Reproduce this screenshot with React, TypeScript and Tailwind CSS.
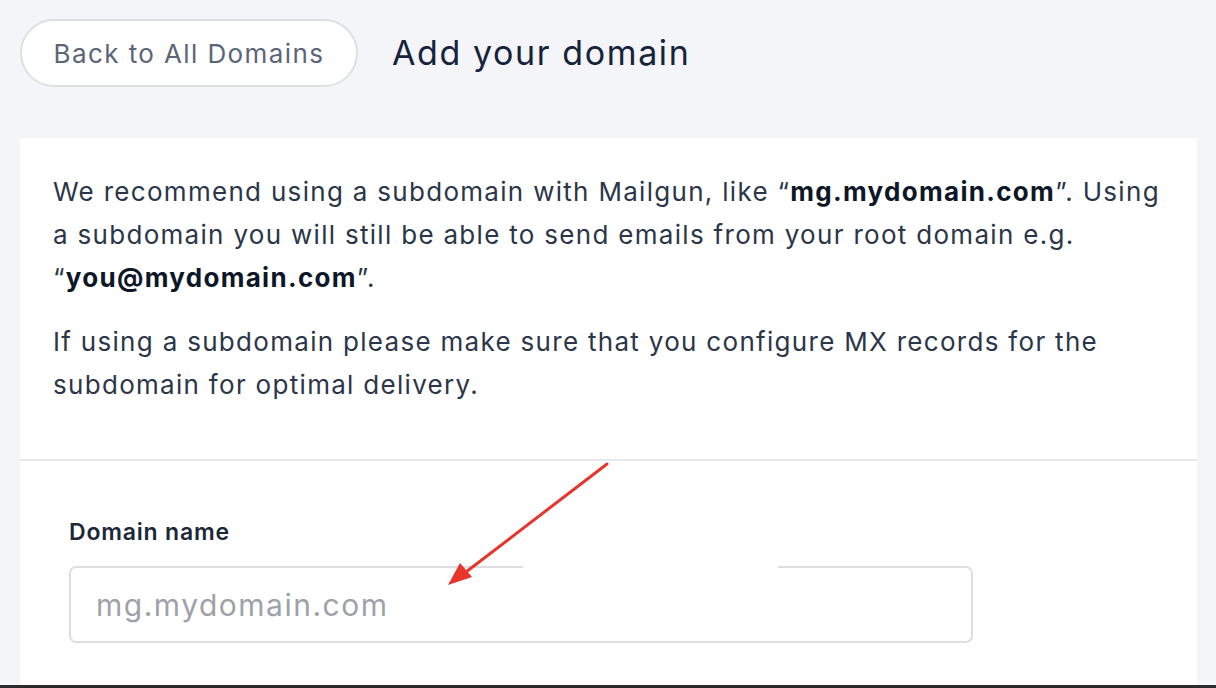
import React from 'react';

const App: React.FC = () => {
  return (
    <div
      className="h-[688px] overflow-hidden bg-[#f3f5f8] flex flex-col"
      style={{ fontFamily: 'Inter, "Noto Sans", sans-serif' }}
    >
      {/* Header */}
      <div className="flex items-start gap-[34px] pl-[20px] pt-[19px] h-[138px]">
        <button
          type="button"
          className="w-[338px] h-[68px] rounded-full border-2 border-[#dcdfe4] bg-white text-[#5b6577] text-[26px] tracking-[1.4px]"
        >
          Back to All Domains
        </button>
        <h1 className="text-[34px] leading-[68px] text-[#17233a] tracking-[1.6px]">Add your domain</h1>
      </div>

      {/* Card */}
      <div className="relative ml-[20px] mr-[19px] flex-1 bg-white flex flex-col">
        <div className="px-[33px] pt-[32px] pb-[32px] text-[26px] leading-[43px] text-[#2b3648] tracking-[1.3px]">
          <p>
            We recommend using a subdomain with Mailgun, like “<b className="font-bold text-[#0d1727]">mg.mydomain.com</b>”. Using
            a subdomain you will still be able to send emails from your root domain e.g.
            “<b className="font-bold text-[#0d1727]">you@mydomain.com</b>”.
          </p>
          <p className="mt-[21px] mb-[21px]">
            If using a subdomain please make sure that you configure MX records for the subdomain for optimal delivery.
          </p>
        </div>
        <div className="h-[2px] bg-[#e6e8eb]" />
        <div className="pl-[49px] pt-[57px]">
          <label className="block text-[23px] font-semibold text-[#1c2738] leading-[28px] tracking-[0.8px]">Domain name</label>
          <div className="relative mt-[20px] w-[904px]">
            <input
              type="text"
              placeholder="mg.mydomain.com"
              className="w-full h-[77px] rounded-[7px] border-2 border-[#dcdee2] px-[25px] text-[30px] tracking-[1.5px] text-[#1c2738] placeholder:text-[#9ea2a8] outline-none"
            />
            {/* white patch over border */}
            <div className="absolute left-[454px] top-[-4px] w-[255px] h-[6px] bg-white" />
          </div>
        </div>

        {/* annotation arrow */}
        <svg className="absolute left-0 top-0 pointer-events-none" width="1177" height="550" viewBox="0 0 1177 550">
          <line x1="587" y1="326" x2="446" y2="434" stroke="#e8352b" strokeWidth="3" strokeLinecap="round" />
          <polygon points="428,447 440,425 452,439" fill="#e8352b" />
        </svg>
      </div>
      <div className="h-[3px] bg-[#2c2c2c]" />
    </div>
  );
};

export default App;
